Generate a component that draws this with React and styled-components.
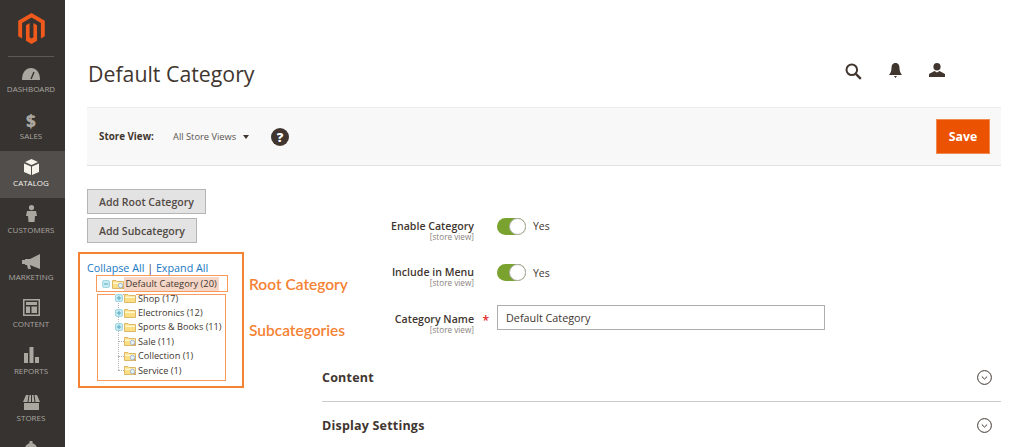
import React from "react";
import styled, { createGlobalStyle } from "styled-components";

const Global = createGlobalStyle`
  html, body { margin: 0; padding: 0; background: #fff; overflow: hidden; }
  body { font-family: "Open Sans", "Liberation Sans", sans-serif; color: #41362f; }
  * { box-sizing: border-box; }
`;
const Page = styled.div`display: flex; width: 1024px; height: 447px; overflow: hidden;`;
const Sidebar = styled.nav`width: 65px; flex: none; background: #373330; display: flex; flex-direction: column; align-items: stretch; overflow: hidden;`;
const LogoWrap = styled.div`height: 57px; flex: none; margin: 0 11px 0 8px; border-bottom: 1px solid #5c5854; display: flex; justify-content: center; padding-top: 13px;`;
const NavItem = styled.div`
  height: 47px; flex: none; display: flex; flex-direction: column; align-items: center; justify-content: flex-end;
  padding: 0 3px 10px 0; gap: 2px; background: ${p => (p.$active ? "#514e4b" : "transparent")};
  color: ${p => (p.$active ? "#f7f3eb" : "#aaa6a0")};
  font-size: 8px; line-height: 11px; text-transform: uppercase; white-space: nowrap;
  svg { display: block; }
`;
const Dollar = styled.span`font-size: 17px; font-weight: 800; line-height: 23px; margin-bottom: -4px; font-family: "Open Sans", sans-serif;`;
const Main = styled.main`flex: 1; min-width: 0; display: flex; flex-direction: column; padding: 0 23px 0 22px;`;
const Header = styled.header`height: 107px; flex: none; display: flex; justify-content: space-between; padding-top: 59px;`;
const Title = styled.h1`margin: 0 0 0 1px; font-size: 21.300px; line-height: 30px; font-weight: 400; color: #41362f;`;
const Actions = styled.div`display: flex; gap: 27px; padding: 4px 56px 0 0; align-items: flex-start; svg { display: block; }`;
const StoreBar = styled.div`height: 59px; flex: none; background: #f8f8f8; border-top: 1px solid #ececec; border-bottom: 1px solid #e3e3e3; display: flex; align-items: center; padding: 0 11px 0 12px;`;
const StoreLabel = styled.span`font-size: 9.800px; font-weight: 700; color: #41362f; width: 74px;`;
const StoreValue = styled.span`font-size: 9.300px; color: #5a5450; width: 70px;`;
const Caret = styled.span`width: 0; height: 0; border: 3px solid transparent; border-top: 4px solid #41362f; border-bottom: 0; margin-right: 22px;`;
const Help = styled.span`width: 18px; height: 18px; border-radius: 50%; background: #41362f; color: #fff; font-size: 13px; font-weight: 800; line-height: 18px; text-align: center;`;
const SaveButton = styled.button`margin-left: auto; width: 54px; height: 35px; background: #eb5202; border: 1px solid #f08a50; color: #fff; font: 700 12.300px "Open Sans", sans-serif; padding: 0;`;
const Body = styled.div`flex: 1; display: flex; min-height: 0;`;
const LeftCol = styled.div`width: 235px; flex: none; display: flex; flex-direction: column; align-items: flex-start; padding-top: 23px; margin-left: -9px;`;
const GreyButton = styled.button`
  margin: 0 0 4px 9px; height: 25px; padding: 0 11px; background: #e3e3e3; border: 1px solid #b5b5b5; color: #514943;
  font: 600 10.550px "Open Sans", sans-serif;
`;
const TreeRow = styled.div`display: flex; align-items: flex-start; gap: 5px;`;
const TreeBox = styled.div`width: 166px; height: 136px; margin-top: 5px; border: 2.500px solid #f58233; padding: 8px 0 0 7px; flex: none;`;
const TreeLinks = styled.div`font-size: 10.750px; line-height: 13px; color: #1979c3; white-space: nowrap; span { color: #41362f; }`;
const RootNode = styled.div`
  width: 132px; height: 17px; margin: 0 0 2px 9px; border: 1px solid #f79a5a; display: flex; align-items: center; padding-left: 5px;
`;
const Highlight = styled.span`background: #f6d6c6; font-size: 9.300px; line-height: 14px; padding: 0 2px 0 1.500px; white-space: nowrap; color: #41362f;`;
const SubBox = styled.div`width: 129px; height: 87px; margin-left: 10px; border: 1px solid #f79a5a; position: relative;`;
const NodeList = styled.div`margin-top: -4px; padding-left: 10px; display: flex; flex-direction: column;`;
const DottedLine = styled.i`position: absolute; left: 20px; top: 0; height: 75px; border-left: 1px dotted #b5b5b5;`;
const Node = styled.div`
  height: 14.400px; display: flex; align-items: center; font-size: 9.200px; color: #41362f; white-space: nowrap; position: relative;
  padding-left: ${p => (p.$leaf ? "16px" : "7px")}; gap: 2px;
  svg { flex: none; background: #fff; position: relative; }
`;
const Tick = styled.i`position: absolute; left: 10px; top: 7px; width: 6px; border-top: 1px dotted #b5b5b5;`;
const Annotations = styled.div`display: flex; flex-direction: column; margin-top: 29px; gap: 30px;`;
const Annotation = styled.span`font: 600 15.500px/16px Lato, sans-serif; color: #f58233; white-space: nowrap;`;
const RightCol = styled.div`flex: 1; min-width: 0; padding-top: 51.500px; margin-left: 9px;`;
const Field = styled.div`display: grid; grid-template-columns: 152px 1fr; column-gap: 23px; height: 46.500px; align-items: start;`;
const FieldLabel = styled.label`display: flex; flex-direction: column; align-items: flex-end; position: relative; font-size: 10.600px; font-weight: 600; line-height: 14px; color: #41362f; padding-top: 1px; white-space: nowrap; small { font-size: 8.200px; font-weight: 400; line-height: 8px; color: #8a837d; }`;
const Star = styled.span`position: absolute; right: -15px; top: 3px; color: #e22626; font-size: 12px;`;
const Toggle = styled.div`display: flex; align-items: center; gap: 7px; font-size: 10.500px; color: #41362f; height: 17px;`;
const Track = styled.span`width: 29px; height: 17px; border-radius: 9px; background: #79a22e; position: relative; display: block;`;
const Knob = styled.span`position: absolute; right: 0; top: 0; width: 17px; height: 17px; border-radius: 50%; background: #fff; border: 1px solid #adadad;`;
const TextInput = styled.input`width: 328px; height: 25px; border: 1px solid #adadad; padding: 0 8px; font: 400 10.800px "Open Sans", sans-serif; color: #41362f; margin-top: -5.500px;`;
const Section = styled.div`display: flex; justify-content: space-between; align-items: center; height: 47.500px; font-size: 12.500px; font-weight: 700; color: #41362f; letter-spacing: .2px; border-bottom: ${p => (p.$line ? "1px solid #cccccc" : "0")}; padding-right: 9px;`;
const Sections = styled.div`margin-top: -2.500px;`;
const ExpanderIcon = styled.svg`margin-right: ${p => (p.$open ? "2px" : "-1px")};`;

const Logo = () => (
  <svg width="27" height="31" viewBox="0 0 24 28" fill="#ef5a1c">
    <polygon points="12,0 0,7 0,21 3.500,23 3.500,9 12,4.100 20.500,9 20.500,23 24,21 24,7" />
    <polygon points="13.750,22 12,23 10.250,22 10.250,9 7,11 7,25 12,28 17,25 17,11 13.750,9" />
  </svg>
);
const ic = "#aaa6a0";
const Gauge = () => (
  <svg width="18" height="14" viewBox="0 0 18 14"><path d="M0 13C0 5 4 1 9 1s9 4 9 12z" fill={ic} /><path d="M9 12l3-7" stroke="#373330" strokeWidth="1.400" /></svg>
);
const BoxIcon = () => (
  <svg width="15" height="16" viewBox="0 0 15 16" fill="#f7f3eb"><path d="M7.500 0L14 3 7.500 6 1 3z" /><path d="M0 4.500l7 3V16l-7-3zM15 4.500l-7 3V16l7-3z" /></svg>
);
const PersonIcon = () => (
  <svg width="11" height="17" viewBox="0 0 11 17" fill={ic}><circle cx="5.500" cy="2.600" r="2.600" /><path d="M1 6h9l1 5H9l-.5 6h-6L2 11H0z" /></svg>
);
const Megaphone = () => (
  <svg width="18" height="15" viewBox="0 0 18 15" fill={ic}><path d="M18 0v15L8 11H3V5h5z" /><path d="M0 6h3v4H0zM5 11h3l1 4H6z" /></svg>
);
const ContentIcon = () => (
  <svg width="17" height="17" viewBox="0 0 17 17" fill="none" stroke={ic}><rect x=".75" y=".75" width="15.500" height="15.500" strokeWidth="1.500" /><path fill={ic} stroke="none" d="M3 3h11v3H3zM3 7.500h4V14H3zM8.500 7.500H14V14H8.500z" /></svg>
);
const Bars = () => (
  <svg width="15" height="16" viewBox="0 0 15 16" fill={ic}><rect y="6" width="4" height="10" /><rect x="5.500" width="4" height="16" /><rect x="11" y="10" width="4" height="6" /></svg>
);
const StoreIcon = () => (
  <svg width="17" height="15" viewBox="0 0 17 15" fill={ic}><path d="M3 0h11l3 7H0z" /><path d="M1 8h15v7H1z" /><path d="M6 0L5 7M8.500 0v7M11 0l1 7" stroke="#373330" /></svg>
);
const Gear = () => (
  <svg width="16" height="16" viewBox="0 0 16 16" fill={ic}><circle cx="8" cy="8" r="6" /><path d="M6.500 0h3v16h-3zM0 6.500h16v3H0z" /></svg>
);
const Search = () => (
  <svg width="17" height="17" viewBox="0 0 17 17" fill="none" stroke="#41362f" strokeWidth="2"><circle cx="6.800" cy="6.800" r="5.300" /><path d="M10.800 10.800l5 5" strokeWidth="2.400" /></svg>
);
const Bell = () => (
  <svg width="13" height="15" viewBox="0 0 13 15" fill="#41362f"><path d="M6.500 0C3.500 0 2.500 2.500 2.500 5c0 3-1 5-2.500 7h13c-1.500-2-2.500-4-2.500-7 0-2.500-1-5-4-5z" /><path d="M5 13h3l-1.500 2z" /></svg>
);
const User = () => (
  <svg width="16" height="14" viewBox="0 0 16 14" fill="#41362f"><ellipse cx="8" cy="3.800" rx="3.600" ry="3.800" /><path d="M5.500 8L0 11v3h16v-3l-5.500-3-2.500 1.500z" /></svg>
);
const Chevron = () => (
  <svg width="15" height="15" viewBox="0 0 15 15" fill="none" stroke="#41362f"><circle cx="7.500" cy="7.500" r="6.900" /><path d="M4.800 6.500l2.700 2.600 2.700-2.600" /></svg>
);
const Folder = ({ leaf }) => (
  <svg width="12" height="10" viewBox="0 0 12 10">
    <path d="M.5 1.500h3.500l1 1h6.500v7H.5z" fill="#fcdf84" stroke="#dcb867" />
    <rect x="1" y="3.500" width="10" height="1.500" fill="#fff6d2" />
    {leaf && <><circle cx="8.500" cy="6.500" r="2.200" fill="#eaf2fa" stroke="#9fb8d0" /><path d="M10 8l2 2" stroke="#d09a66" /></>}
  </svg>
);
const Expander = ({ open }) => (
  <ExpanderIcon $open={open} width="8" height="8" viewBox="0 0 9 9">
    <rect x=".5" y=".5" width="8" height="8" rx="2" fill="#c9ecf3" stroke="#8fd0de" />
    <path d={open ? "M2 4.500h5" : "M2 4.500h5M4.500 2v5"} stroke="#4aa3b8" />
  </ExpanderIcon>
);

const nav = [
  ["Dashboard", <Gauge />],
  ["Sales", <Dollar>$</Dollar>],
  ["Catalog", <BoxIcon />, true],
  ["Customers", <PersonIcon />],
  ["Marketing", <Megaphone />],
  ["Content", <ContentIcon />],
  ["Reports", <Bars />],
  ["Stores", <StoreIcon />],
];

const nodes = [
  ["Shop (17)"], ["Electronics (12)"], ["Sports & Books (11)"],
  ["Sale (11)", true], ["Collection (1)", true], ["Service (1)", true],
];

export default function App() {
  return (
    <Page>
      <Global />
      <Sidebar>
        <LogoWrap><Logo /></LogoWrap>
        {nav.map(([label, icon, active]) => (
          <NavItem key={label} $active={active}>{icon}<span>{label}</span></NavItem>
        ))}
        <NavItem><Gear /><span>&nbsp;</span></NavItem>
      </Sidebar>
      <Main>
        <Header>
          <Title>Default Category</Title>
          <Actions><Search /><Bell /><User /></Actions>
        </Header>
        <StoreBar>
          <StoreLabel>Store View:</StoreLabel>
          <StoreValue>All Store Views</StoreValue>
          <Caret />
          <Help>?</Help>
          <SaveButton>Save</SaveButton>
        </StoreBar>
        <Body>
          <LeftCol>
            <GreyButton>Add Root Category</GreyButton>
            <GreyButton>Add Subcategory</GreyButton>
            <TreeRow>
              <TreeBox>
                <TreeLinks>Collapse All <span>|</span> Expand All</TreeLinks>
                <RootNode><Expander open /><Folder leaf /><Highlight>Default Category (20)</Highlight></RootNode>
                <SubBox>
                  <DottedLine />
                  <NodeList>
                    {nodes.map(([t, leaf]) => (
                      <Node key={t} $leaf={leaf}>{leaf && <Tick />}{!leaf && <Expander />}<Folder leaf={leaf} /><span>{t}</span></Node>
                    ))}
                  </NodeList>
                </SubBox>
              </TreeBox>
              <Annotations>
                <Annotation>Root Category</Annotation>
                <Annotation>Subcategories</Annotation>
              </Annotations>
            </TreeRow>
          </LeftCol>
          <RightCol>
            <Field>
              <FieldLabel>Enable Category<small>[store view]</small></FieldLabel>
              <Toggle><Track><Knob /></Track>Yes</Toggle>
            </Field>
            <Field>
              <FieldLabel>Include in Menu<small>[store view]</small></FieldLabel>
              <Toggle><Track><Knob /></Track>Yes</Toggle>
            </Field>
            <Field>
              <FieldLabel>Category Name<small>[store view]</small><Star>*</Star></FieldLabel>
              <TextInput defaultValue="Default Category" />
            </Field>
            <Sections>
              <Section $line>Content<Chevron /></Section>
              <Section>Display Settings<Chevron /></Section>
            </Sections>
          </RightCol>
        </Body>
      </Main>
    </Page>
  );
}
